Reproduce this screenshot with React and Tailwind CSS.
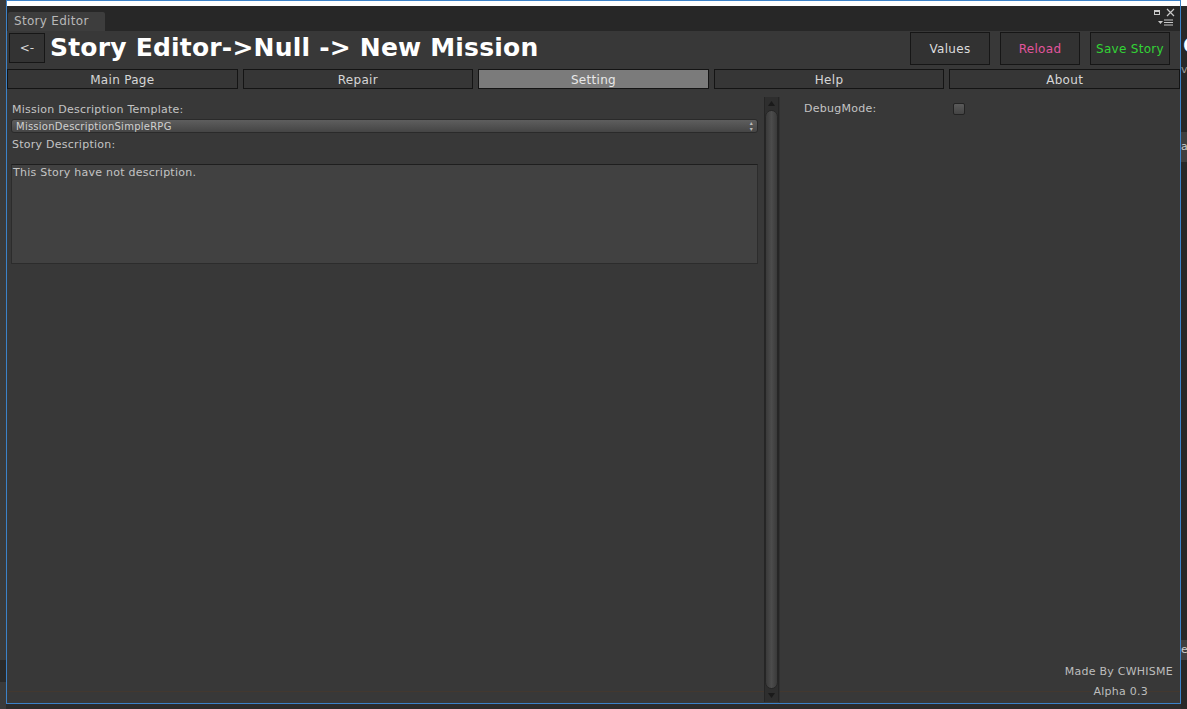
import React from "react";

const font = { fontFamily: '"DejaVu Sans", Verdana, sans-serif' };

function TopButton({ children, color }) {
  return (
    <div className={`w-[80px] h-[33px] border border-[#161616] bg-[#323232] flex items-center justify-center text-[12px] tracking-[0.3px] ${color}`}>
      {children}
    </div>
  );
}

function Tab({ children, active }) {
  return (
    <div
      className={`flex-1 h-[20px] border border-[#141414] flex items-center justify-center pt-[2px] text-[12px] tracking-[0.3px] ${
        active ? "bg-[#7b7b7b] text-[#e8e8e8]" : "bg-[#363636] text-[#d6d6d6]"
      }`}
    >
      {children}
    </div>
  );
}

export default function App() {
  return (
    <div className="w-[1187px] h-[709px] bg-[#2b2b2b] flex overflow-hidden" style={font}>
      {/* left strip */}
      <div className="w-[6px] h-full bg-[#3a3a3a] flex flex-col">
        <div className="h-[660px]" />
        <div className="h-[22px] bg-[#2a2a2a]" />
        <div className="flex-1" />
      </div>

      {/* window */}
      <div className="w-[1175px] h-[704px] border border-[#3c82c8] flex flex-col">
        <div className="h-[5px] bg-white" />
        {/* title bar */}
        <div className="h-[25px] bg-[#272727] flex items-end pl-[1px] relative">
          <div className="w-[97px] h-[19px] bg-[#3d3d3d] rounded-t-[2px] text-[12px] text-[#b8b8b8] pl-[6px] leading-[19px] tracking-[0.3px]">
            Story Editor
          </div>
          <div className="absolute right-[5px] top-[2px] flex items-center gap-[6px] text-[#c8c8c8]">
            <div className="w-[6px] h-[5px] border border-[#c8c8c8] border-t-2" />
            <svg width="9" height="9" viewBox="0 0 9 9">
              <path d="M1 1 L8 8 M8 1 L1 8" stroke="#c8c8c8" strokeWidth="1.2" />
            </svg>
          </div>
          <div className="absolute right-[7px] top-[13px] flex items-center gap-[1px]">
            <svg width="5" height="4" viewBox="0 0 5 4">
              <path d="M0 0 L5 0 L2.5 3 Z" fill="#c8c8c8" />
            </svg>
            <svg width="9" height="7" viewBox="0 0 9 7">
              <path d="M0 1 H9 M0 3.5 H9 M0 6 H9" stroke="#c8c8c8" strokeWidth="1" />
            </svg>
          </div>
        </div>

        {/* content */}
        <div className="flex-1 bg-[#383838] flex flex-col relative">
          <div className="h-[1px] bg-[#43382f] absolute left-0 right-0 bottom-[11px]" />
          {/* header row */}
          <div className="h-[38px] flex items-start pl-[2px] pr-[10px]">
            <div className="mt-[2px] w-[36px] h-[30px] border border-[#161616] bg-[#333333] flex items-center justify-center text-[12px] text-[#d8d8d8]">
              &lt;-
            </div>
            <div className="ml-[5px] mt-[3px] h-[26px] flex items-center text-[25px] font-bold text-white leading-none tracking-[0.2px]">
              Story Editor-&gt;Null -&gt; New Mission
            </div>
            <div className="ml-auto mt-[1px] flex gap-[10px]">
              <TopButton color="text-[#dcdcdc]">Values</TopButton>
              <TopButton color="text-[#e2559e]">Reload</TopButton>
              <TopButton color="text-[#33d436]">Save Story</TopButton>
            </div>
          </div>

          {/* tabs */}
          <div className="flex gap-[5px]">
            <Tab>Main Page</Tab>
            <Tab>Repair</Tab>
            <Tab active>Setting</Tab>
            <Tab>Help</Tab>
            <Tab>About</Tab>
          </div>

          {/* body */}
          <div className="flex-1 flex pt-[8px] tracking-[0.25px] relative">
            {/* left */}
            <div className="w-[753px] flex flex-col pl-[4px] pr-[2px] text-[11px] text-[#c4c4c4]">
              <div className="mt-[5px] h-[16px] leading-[16px] pl-[1px]">Mission Description Template:</div>
              <div className="mt-[1px] h-[14px] rounded-[3px] bg-gradient-to-b from-[#5e5e5e] to-[#454545] border border-[#2a2a2a] flex items-center pl-[4px] pr-[4px] text-[10px] text-[#d0d0d0]">
                <span>MissionDescriptionSimpleRPG</span>
                <span className="ml-auto flex flex-col items-center leading-none text-[6px] text-[#bbbbbb]">
                  <span>▴</span>
                  <span>▾</span>
                </span>
              </div>
              <div className="mt-[3px] h-[18px] leading-[18px] pl-[1px]">Story Description:</div>
              <div className="mt-[10px] h-[100px] bg-[#414141] border border-[#2c2c2c] border-t-[#1e1e1e] pl-[1px] pt-[1px] text-[#c4c4c4] leading-[14px]">
                This Story have not description.
              </div>
            </div>

            {/* scrollbar */}
            <div className="w-[15px] ml-[4px] mb-[1px] bg-[#2e2e2e] border-x border-[#252525] flex flex-col items-center">
              <div className="h-[13px] w-full flex items-center justify-center">
                <svg width="7" height="5" viewBox="0 0 7 5">
                  <path d="M0 5 L3.5 0 L7 5 Z" fill="#1a1a1a" />
                </svg>
              </div>
              <div className="flex-1 w-[13px] rounded-full bg-gradient-to-r from-[#3a3a3a] via-[#4c4c4c] to-[#3a3a3a] border border-[#262626]" />
              <div className="h-[13px] w-full flex items-center justify-center">
                <svg width="7" height="5" viewBox="0 0 7 5">
                  <path d="M0 0 L7 0 L3.5 5 Z" fill="#1a1a1a" />
                </svg>
              </div>
            </div>

            {/* right */}
            <div className="flex-1 border-l border-[#303030] relative text-[11px] text-[#c4c4c4]">
              <div className="flex items-center mt-[5px] h-[14px] pl-[24px]">
                <span className="w-[149px]">DebugMode:</span>
                <div className="w-[12px] h-[12px] rounded-[2px] bg-gradient-to-b from-[#5a5a5a] to-[#444444] border border-[#232323]" />
              </div>
              <div className="absolute right-[7px] bottom-[1px] flex flex-col items-end text-[#bdbdbd] text-[11px] leading-[20px]">
                <span>Made By CWHISME</span>
                <span className="mr-[25px] bg-[#383838]">Alpha 0.3</span>
              </div>
            </div>
          </div>
        </div>
      </div>

      {/* right strip */}
      <div className="flex-1 h-full bg-[#282828] flex flex-col relative">
        <div className="h-[6px] bg-white" />
        <div className="absolute left-[2px] top-[35px] text-[22px] font-bold text-white leading-none">C</div>
        <div className="absolute left-[0px] top-[62px] text-[11px] text-[#999]">v</div>
        <div className="absolute left-0 top-[132px] w-full h-[30px] bg-[#3f3f3f] text-[11px] text-[#ccc] leading-[30px]">al</div>
        <div className="absolute left-0 top-[640px] w-full h-[20px] bg-[#3f3f3f] text-[11px] text-[#ccc] leading-[20px]">e</div>
      </div>
    </div>
  );
}
